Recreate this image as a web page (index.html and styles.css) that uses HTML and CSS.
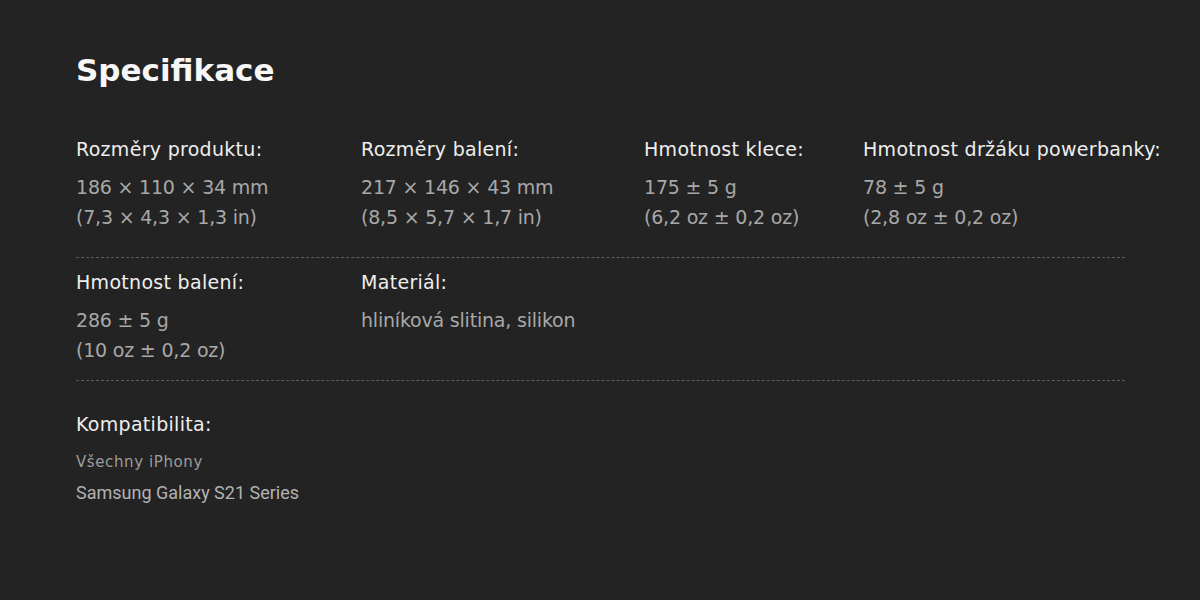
FILE: index.html
```html
<!DOCTYPE html>
<html lang="cs">
<head>
    <meta charset="UTF-8">
    <meta name="viewport" content="width=device-width, initial-scale=1.0">
    <title>Specifikace</title>
    <link rel="stylesheet" href="styles.css">
</head>
<body>
    <section class="specs">
        <h2 class="specs-title">Specifikace</h2>

        <!-- Rozměry a hmotnosti -->
        <div class="specs-row specs-row-first">
            <div class="spec">
                <div class="spec-label">Rozměry produktu:</div>
                <div class="spec-value">186 × 110 × 34 mm<br>(7,3 × 4,3 × 1,3 in)</div>
            </div>
            <div class="spec">
                <div class="spec-label">Rozměry balení:</div>
                <div class="spec-value">217 × 146 × 43 mm<br>(8,5 × 5,7 × 1,7 in)</div>
            </div>
            <div class="spec">
                <div class="spec-label">Hmotnost klece:</div>
                <div class="spec-value">175 ± 5 g<br>(6,2 oz ± 0,2 oz)</div>
            </div>
            <div class="spec">
                <div class="spec-label">Hmotnost držáku powerbanky:</div>
                <div class="spec-value">78 ± 5 g<br>(2,8 oz ± 0,2 oz)</div>
            </div>
        </div>

        <div class="specs-row">
            <div class="spec">
                <div class="spec-label">Hmotnost balení:</div>
                <div class="spec-value">286 ± 5 g<br>(10 oz ± 0,2 oz)</div>
            </div>
            <div class="spec">
                <div class="spec-label">Materiál:</div>
                <div class="spec-value">hliníková slitina, silikon</div>
            </div>
        </div>

        <!-- Kompatibilita -->
        <div class="compat">
            <div class="spec-label">Kompatibilita:</div>
            <div class="compat-item">Všechny iPhony</div>
            <div class="compat-item compat-strong">Samsung Galaxy S21 Series</div>
        </div>
    </section>
</body>
</html>
```

FILE: styles.css
```css
/* Obecné */
body {
    margin: 0;
    background-color: #232323;
    font-family: 'DejaVu Sans', 'Open Sans', sans-serif;
    color: #ececec;
}

.specs {
    width: 1049px;
    padding: 52px 0 0 76px;
}

.specs-title {
    margin: 0 0 50px;
    font-size: 31px;
    font-weight: bold;
    color: #f7f7f7;
}

/* Řádky specifikací */
.specs-row {
    display: grid;
    grid-template-columns: 285px 283px 219px auto;
    border-bottom: 1px dashed #5e5e5e;
    padding-bottom: 15px;
    margin-bottom: 13px;
}

.specs-row-first {
    padding-bottom: 25px;
}

.spec-label {
    font-size: 19px;
    line-height: 22px;
    letter-spacing: 0.3px;
    margin-bottom: 12px;
    color: #eeeeee;
    white-space: nowrap;
}

.spec-value {
    font-size: 19px;
    line-height: 30px;
    letter-spacing: -0.2px;
    color: #a8a8a8;
}

/* Kompatibilita */
.compat {
    padding-top: 19px;
}

.compat .spec-label {
    margin-bottom: 17px;
}

.compat-item {
    font-size: 15px;
    line-height: 20px;
    letter-spacing: 0.6px;
    color: #9c9c9c;
    margin-bottom: 10px;
}

.compat-strong {
    font-family: 'Roboto', sans-serif;
    font-size: 18px;
    line-height: 22px;
    letter-spacing: 0;
    color: #b2b2b2;
}
```
